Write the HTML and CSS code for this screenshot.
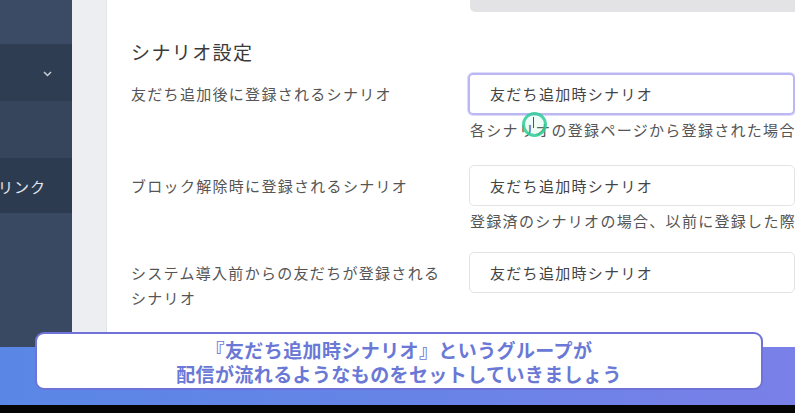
FILE: index.html
```html
<!DOCTYPE html>
<html lang="ja">
<head>
<meta charset="utf-8">
<link rel="stylesheet" href="styles.css">
</head>
<body>
<div class="screen">
  <div class="app">
    <aside class="sidebar">
      <div class="nav nav-a"></div>
      <div class="nav nav-b">
        <svg class="chev" width="9" height="6" viewBox="0 0 9 6"><path d="M1 1 L4.5 4.5 L8 1" fill="none" stroke="#c9ced8" stroke-width="1.5"/></svg>
      </div>
      <div class="nav nav-c"></div>
      <div class="nav nav-d"><span class="nav-text">リンク</span></div>
      <div class="nav nav-e"></div>
    </aside>
    <div class="gutter"></div>
    <main class="content">
      <div class="row prev">
        <div></div>
        <div class="prev-input"></div>
      </div>
      <h2 class="section-title">シナリオ設定</h2>
      <div class="row">
        <label class="label">友だち追加後に登録されるシナリオ</label>
        <div class="field">
          <div class="input focused">友だち追加時シナリオ</div>
          <p class="help">各シナリオの登録ページから登録された場合</p>
        </div>
      </div>
      <div class="row row2">
        <label class="label">ブロック解除時に登録されるシナリオ</label>
        <div class="field">
          <div class="input">友だち追加時シナリオ</div>
          <p class="help">登録済のシナリオの場合、以前に登録した際</p>
        </div>
      </div>
      <div class="row row3">
        <label class="label">システム導入前からの友だちが登録される<br>シナリオ</label>
        <div class="field">
          <div class="input">友だち追加時シナリオ</div>
        </div>
      </div>
      <div class="cursor"><span class="ibeam"></span></div>
    </main>
  </div>
  <div class="band"></div>
  <div class="letterbox"></div>
  <div class="caption">『友だち追加時シナリオ』というグループが<br>配信が流れるようなものをセットしていきましょう</div>
</div>
</body>
</html>
```
FILE: styles.css
```css
* { box-sizing: border-box; }
html, body { margin: 0; padding: 0; }
body {
  width: 795px;
  height: 413px;
  overflow: hidden;
  font-family: "Noto Sans CJK JP", "Noto Sans", sans-serif;
  background: #000;
}
.screen {
  position: relative;
  width: 795px;
  height: 413px;
  display: flex;
  flex-direction: column;
}
.app {
  height: 347px;
  display: flex;
  overflow: hidden;
}
.sidebar {
  width: 72px;
  flex: none;
  display: flex;
  flex-direction: column;
  background: #3a4962;
}
.nav { flex: none; position: relative; }
.nav-a { height: 44px; background: #3c4b65; }
.nav-b { height: 57px; background: #2f3d53; display: flex; align-items: center; justify-content: flex-end; padding-right: 20px; }
.nav-c { height: 57px; background: #36455c; }
.nav-d { height: 55px; background: #2d3b50; display: flex; align-items: center; overflow: hidden; }
.nav-e { flex: 1; background: #3a4962; }
.chev { display: block; margin-top: 2px; }
.nav-text {
  color: #e3e6ec;
  font-size: 15px;
  letter-spacing: 1px;
  margin-left: -2px;
  margin-top: 1px;
  white-space: nowrap;
}
.gutter {
  width: 35px;
  flex: none;
  background: #eceef1;
  border-right: 1px solid #e2e4e8;
}
.content {
  flex: 1;
  position: relative;
  background: #fff;
  padding-left: 24px;
  color: #555;
}
.row {
  display: grid;
  grid-template-columns: 337px 1fr;
}
.prev-input {
  height: 12px;
  margin-left: 2px;
  background: #e3e3e6;
  border-radius: 0 0 0 5px;
}
.section-title {
  margin: 26px 0 7px;
  font-size: 19px;
  line-height: 28px;
  font-weight: 400;
  letter-spacing: 1.4px;
  color: #3a3a3a;
}
.label {
  font-size: 15px;
  line-height: 25px;
  letter-spacing: 1.3px;
  color: #555;
  padding-top: 8px;
}
.field { min-width: 0; }
.input {
  height: 41px;
  border: 1px solid #e3e3e3;
  border-radius: 5px;
  padding-left: 20px;
  margin-left: 1px;
  font-size: 15px;
  line-height: 39px;
  letter-spacing: 1.3px;
  color: #444;
  white-space: nowrap;
  overflow: hidden;
}
.input.focused {
  height: 42px;
  margin-left: 0;
  border: 2px solid #bbb7f2;
  box-shadow: 0 0 0 1px #dedcf9;
  line-height: 38px;
}
.help {
  margin: 4px 0 0 2px;
  font-size: 15px;
  line-height: 22px;
  letter-spacing: 1.3px;
  color: #555;
  white-space: nowrap;
}
.row2 { margin-top: 24px; }
.row3 { margin-top: 20px; }
.cursor {
  position: absolute;
  left: 415px;
  top: 112px;
  width: 25px;
  height: 25px;
  border: 3px solid rgba(46, 204, 150, 0.85);
  border-radius: 50%;
  background: rgba(120, 230, 190, 0.12);
}
.ibeam {
  position: absolute;
  left: 8px;
  top: 2px;
  width: 3px;
  height: 11px;
  border-left: 1px solid #555;
}
.band {
  height: 58px;
  flex: none;
  background: linear-gradient(90deg, #5a87e6 0%, #6484e6 45%, #7a80e8 100%);
}
.letterbox {
  flex: 1;
  background: #050505;
}
.caption {
  position: absolute;
  left: 35px;
  top: 332px;
  width: 728px;
  height: 58px;
  background: #fff;
  border: 2px solid #6e72d9;
  border-radius: 9px;
  padding-top: 4px;
  text-align: center;
  font-size: 19px;
  line-height: 24px;
  font-weight: 700;
  letter-spacing: 0.4px;
  color: #6a78d6;
}
```
